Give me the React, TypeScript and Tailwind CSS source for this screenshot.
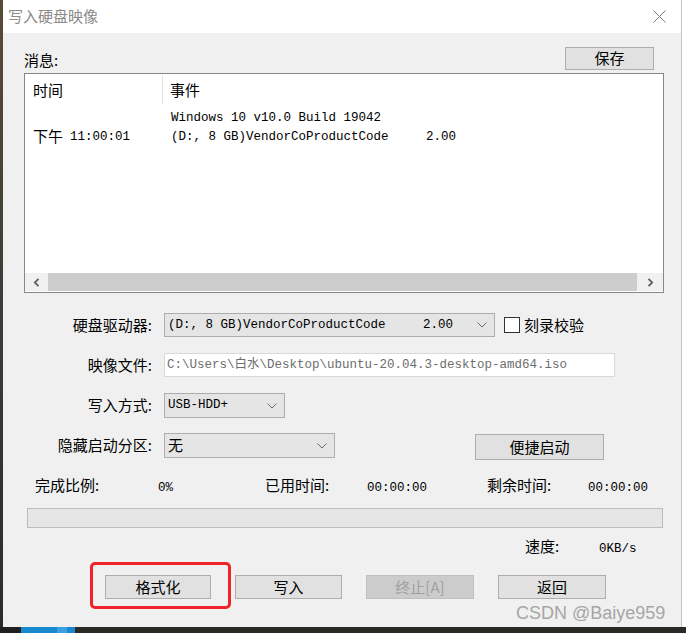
import React from "react";

const cjk = { fontFamily: '"Noto Sans CJK SC", "Microsoft YaHei", sans-serif' };
const mono = { fontFamily: '"Liberation Mono", "Noto Sans CJK SC", monospace' };

function Chevron({ className = "" }: { className?: string }) {
  return (
    <svg width="10" height="6" viewBox="0 0 10 6" className={className}>
      <polyline points="0.5,0.5 5,5 9.5,0.5" fill="none" stroke="#6a6a6a" strokeWidth="1" />
    </svg>
  );
}

function Select({ w, children }: { w: string; children: React.ReactNode }) {
  return (
    <div className={`${w} h-full flex items-center justify-between bg-[#e5e5e5] border border-[#adadad] pl-[3px] pr-[7px]`}>
      <div className="whitespace-pre text-[12.5px] text-black leading-none" style={mono}>{children}</div>
      <Chevron />
    </div>
  );
}

function Btn({ children, w, disabled = false }: { children: React.ReactNode; w: string; disabled?: boolean }) {
  return (
    <div
      className={`${w} h-full flex items-center justify-center border text-[15px] leading-none pb-[2px] ${
        disabled ? "bg-[#cccccc] border-[#bfbfbf] text-[#a0a0a0]" : "bg-[#e1e1e1] border-[#adadad] text-black"
      }`}
      style={cjk}
    >
      {children}
    </div>
  );
}

export default function App() {
  return (
    <div className="relative w-[686px] h-[633px] bg-[#232323] overflow-hidden flex flex-col" style={cjk}>
      <div className="flex h-[627px]">
        <div className="w-[3px] bg-gradient-to-b from-[#5a4a38] via-[#3a3d38] to-[#2b2b2b]" />
        <div className="w-[679px] flex flex-col border-r border-[#c4c4c4]">
          {/* title bar */}
          <div className="h-[33px] bg-white flex items-center justify-between pl-[5px] pr-[15px]">
            <span className="text-[15px] leading-none text-[#8a8a8a] relative top-[-1px]">写入硬盘映像</span>
            <svg width="13" height="13" viewBox="0 0 13 13">
              <line x1="0.5" y1="0.5" x2="12.5" y2="12.5" stroke="#7a7a7a" strokeWidth="1" />
              <line x1="12.5" y1="0.5" x2="0.5" y2="12.5" stroke="#7a7a7a" strokeWidth="1" />
            </svg>
          </div>
          {/* body */}
          <div className="flex-1 bg-[#f0f0f0] pl-[21px] pr-[17px] flex flex-col">
            <div className="mt-[14px] h-[23px] flex items-end justify-between pr-[10px]">
              <span className="text-[15px] leading-[20px] text-black">消息:</span>
              <Btn w="w-[89px]">保存</Btn>
            </div>
            {/* list */}
            <div className="mt-[3px] h-[220px] border border-[#828790] bg-white flex flex-col">
              <div className="h-[30px] flex items-center text-[15px] text-black">
                <div className="w-[138px] h-[29px] pl-[8px] flex items-center border-r border-[#e5e5e5] leading-none">时间</div>
                <div className="pl-[7px] leading-none">事件</div>
              </div>
              <div className="mt-[4px] h-[20px] flex items-center">
                <div className="w-[138px]" />
                <div className="pl-[8px] whitespace-pre text-[12.5px] leading-none" style={mono}>Windows 10 v10.0 Build 19042</div>
              </div>
              <div className="h-[19px] flex items-center">
                <div className="w-[138px] pl-[8px] flex items-center leading-none">
                  <span className="text-[15px] leading-none relative top-[-2px]" style={cjk}>下午</span>
                  <span className="ml-[7px] text-[12.5px] leading-none" style={mono}>11:00:01</span>
                </div>
                <div className="pl-[8px] whitespace-pre text-[12.5px] leading-none" style={mono}>{"(D:, 8 GB)VendorCoProductCode     2.00"}</div>
              </div>
              <div className="flex-1" />
              <div className="h-[18px] mb-[1px] flex bg-[#f0f0f0]">
                <div className="w-[23px] flex items-center justify-center">
                  <svg width="7" height="9" viewBox="0 0 7 9">
                    <polyline points="5.5,0.8 1.8,4.5 5.5,8.2" fill="none" stroke="#606060" strokeWidth="1.8" />
                  </svg>
                </div>
                <div className="flex-1 bg-[#cdcdcd]" />
                <div className="w-[26px] flex items-center justify-center">
                  <svg width="7" height="9" viewBox="0 0 7 9">
                    <polyline points="1.5,0.8 5.2,4.5 1.5,8.2" fill="none" stroke="#606060" strokeWidth="1.8" />
                  </svg>
                </div>
              </div>
            </div>
            {/* form rows */}
            <div className="mt-[20px] h-[24px] flex items-center">
              <div className="w-[131px] text-right text-[15px] leading-none pr-[3px] pb-[2px]">硬盘驱动器:</div>
              <div className="ml-[9px] h-full flex items-center">
                <Select w="w-[331px]">{"(D:, 8 GB)VendorCoProductCode     2.00"}</Select>
              </div>
              <div className="ml-[9px] w-[16px] h-[16px] border border-[#333] bg-white" />
              <span className="ml-[4px] text-[15px] leading-none pb-[2px]">刻录校验</span>
            </div>
            <div className="mt-[16px] h-[24px] flex items-center">
              <div className="w-[131px] text-right text-[15px] leading-none pr-[3px] pb-[2px]">映像文件:</div>
              <div className="ml-[9px] w-[451px] h-full bg-white border border-[#d9d9d9] flex items-center pl-[2px]">
                <span className="whitespace-pre text-[12.5px] text-[#6d6d6d] leading-none" style={mono}>C:\Users\白水\Desktop\ubuntu-20.04.3-desktop-amd64.iso</span>
              </div>
            </div>
            <div className="mt-[16px] h-[25px] flex items-center">
              <div className="w-[131px] text-right text-[15px] leading-none pr-[3px] pb-[2px]">写入方式:</div>
              <div className="ml-[9px] h-full flex items-center">
                <Select w="w-[121px]">USB-HDD+</Select>
              </div>
            </div>
            <div className="mt-[15px] h-[25px] flex items-start">
              <div className="w-[131px] h-full flex items-center justify-end text-[15px] leading-none pr-[3px] pb-[2px]">隐藏启动分区:</div>
              <div className="ml-[9px] h-full flex items-center">
                <div className="w-[171px] h-full flex items-center justify-between bg-[#e5e5e5] border border-[#adadad] pl-[3px] pr-[7px]">
                  <span className="text-[15px] leading-none pb-[2px]">无</span>
                  <Chevron />
                </div>
              </div>
              <div className="ml-[140px] mt-[1px] h-[26px]">
                <Btn w="w-[129px]">便捷启动</Btn>
              </div>
            </div>
            {/* stats */}
            <div className="mt-[17px] h-[20px] flex items-baseline pl-[11px] text-[15px] leading-[20px] text-black">
              <div className="w-[123px]">完成比例:</div>
              <div className="w-[107px] text-[12.5px]" style={mono}>0%</div>
              <div className="w-[102px]">已用时间:</div>
              <div className="w-[120px] text-[12.5px]" style={mono}>00:00:00</div>
              <div className="w-[101px]">剩余时间:</div>
              <div className="text-[12.5px]" style={mono}>00:00:00</div>
            </div>
            <div className="mt-[13px] ml-[3px] w-[636px] h-[20px] bg-[#e6e6e6] border border-[#bcbcbc]" />
            <div className="mt-[8px] h-[20px] flex items-baseline pl-[501px] text-[15px] leading-[20px]">
              <div className="w-[74px]">速度:</div>
              <div className="text-[12.5px]" style={mono}>0KB/s</div>
            </div>
            <div className="mt-[19px] h-[24px] flex pl-[81px] gap-[24px]">
              <Btn w="w-[106px]">格式化</Btn>
              <Btn w="w-[107px]">写入</Btn>
              <Btn w="w-[108px]" disabled>终止[A]</Btn>
              <Btn w="w-[108px]">返回</Btn>
            </div>
          </div>
        </div>
        <div className="flex-1 bg-white" />
      </div>
      <div className="h-[6px] flex bg-[#1f1f1f]">
        <div className="w-[21px]" />
        <div className="w-[36px] bg-[#1a8ad0]" />
        <div className="w-[10px] bg-[#3aa0e0]" />
        <div className="w-[8px] bg-[#1a8ad0]" />
        <div className="flex-1 bg-[#2c2a27]" />
      </div>
      {/* annotation */}
      <div className="absolute left-[90px] top-[562px] w-[141px] h-[47px] border-[3px] border-[#f0232a] rounded-[5px]" />
      <div
        className="absolute left-[516px] top-[604px] text-[18px] leading-[18px] text-[#a6a6a6] whitespace-nowrap"
        style={{ fontFamily: '"Liberation Sans", Arial, sans-serif' }}
      >
        CSDN @Baiye959
      </div>
    </div>
  );
}
